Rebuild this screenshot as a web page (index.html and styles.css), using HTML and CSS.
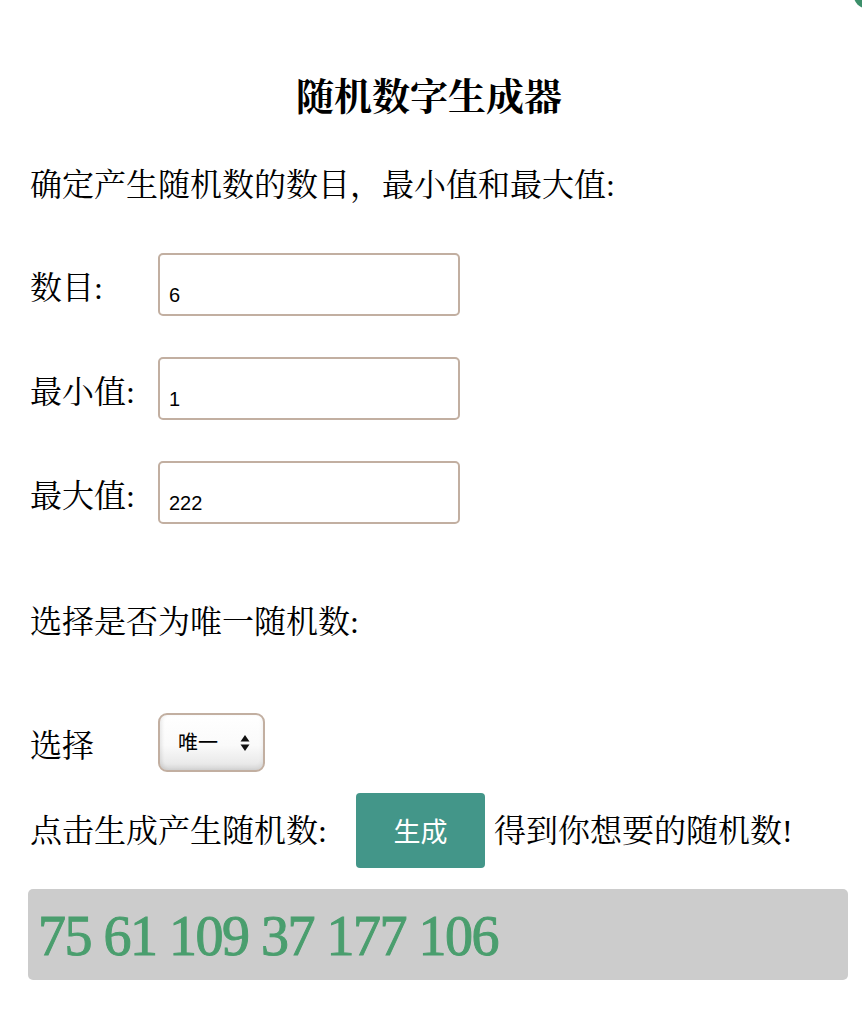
FILE: index.html
```html
<!DOCTYPE html>
<html lang="zh-CN">
<head>
  <meta charset="UTF-8" />
  <meta name="viewport" content="width=device-width, initial-scale=1.0" />
  <title>随机数字生成器</title>
  <link rel="stylesheet" href="styles.css">
</head>
<body>
  <div class="canto"></div>

  <main class="pagina">
    <h1>随机数字生成器</h1>
    <p class="texto">确定产生随机数的数目，最小值和最大值:</p>

    <div class="linha primeira">
      <label for="quantidade">数目:</label>
      <input type="text" id="quantidade" value="6" />
    </div>
    <div class="linha">
      <label for="minimo">最小值:</label>
      <input type="text" id="minimo" value="1" />
    </div>
    <div class="linha">
      <label for="maximo">最大值:</label>
      <input type="text" id="maximo" value="222" />
    </div>

    <p class="texto unico">选择是否为唯一随机数:</p>

    <div class="linha escolha">
      <label for="tipo">选择</label>
      <div class="caixa-select">
        <select id="tipo">
          <option>唯一</option>
          <option>重复</option>
        </select>
        <svg class="setas" width="10" height="18" viewBox="0 0 10 18">
          <path d="M5 1 L9.5 7.5 L0.5 7.5 Z" fill="#111" />
          <path d="M5 17 L9.5 10.5 L0.5 10.5 Z" fill="#111" />
        </svg>
      </div>
    </div>

    <div class="linha-botao">
      <span class="rotulo">点击生成产生随机数:</span>
      <button onclick="gerar()">生成</button>
      <span class="depois">得到你想要的随机数!</span>
    </div>

    <div class="resultado" id="resultado">75 61 109 37 177 106</div>
  </main>

  <script>
    function gerar() {
      const n = parseInt(document.getElementById('quantidade').value) || 0;
      const min = parseInt(document.getElementById('minimo').value) || 0;
      const max = parseInt(document.getElementById('maximo').value) || 0;
      const unico = document.getElementById('tipo').selectedIndex === 0;
      const lista = [];

      while (lista.length < n) {
        const x = Math.floor(Math.random() * (max - min + 1)) + min;
        if (unico && lista.includes(x)) {
          if (max - min + 1 <= lista.length) break;
          continue;
        }
        lista.push(x);
      }

      document.getElementById('resultado').innerText = lista.join(' ');
    }
  </script>
</body>
</html>
```

FILE: styles.css
```css
:root {
  --verde: #439689;
  --verde-numero: #4a9e6e;
  --borda: #c2afa1;
}

* {
  margin: 0;
  padding: 0;
  box-sizing: border-box;
}

body {
  font-family: "Liberation Serif", "Noto Serif CJK SC", "Noto Sans CJK SC", serif;
  background: #fff;
  color: #000;
  overflow: hidden;
}

.canto {
  position: absolute;
  top: -16px;
  right: -16px;
  width: 24px;
  height: 24px;
  border-radius: 50%;
  background: #3c8f6a;
}

.pagina {
  padding: 74px 14px 40px 28px;
}

h1 {
  font-size: 38px;
  line-height: 46px;
  text-align: center;
  font-weight: bold;
  margin-bottom: 45px;
  padding-right: 18px;
}

.texto {
  font-size: 32px;
  line-height: 40px;
  padding-left: 2px;
}

.linha {
  display: flex;
  align-items: center;
  margin-bottom: 41px;
}

.linha.primeira {
  margin-top: 48px;
}

.linha label {
  width: 130px;
  font-size: 32px;
  line-height: 40px;
  padding-left: 2px;
  padding-top: 6px;
}

.linha input {
  width: 302px;
  height: 63px;
  border: 2px solid var(--borda);
  border-radius: 5px;
  font-family: "Liberation Sans", "Noto Sans CJK SC", sans-serif;
  font-size: 20px;
  padding: 22px 9px 0;
  color: #000;
  outline: none;
}

.texto.unico {
  margin-top: 78px;
}

.linha.escolha {
  margin-top: 71px;
  margin-bottom: 21px;
}

.caixa-select {
  position: relative;
  width: 107px;
  height: 59px;
}

.caixa-select select {
  appearance: none;
  -webkit-appearance: none;
  width: 100%;
  height: 100%;
  border: 2px solid var(--borda);
  border-radius: 9px;
  background: linear-gradient(#ffffff 0%, #fafafa 55%, #e4e4e4 100%);
  box-shadow: inset 0 -3px 4px rgba(0, 0, 0, 0.08), inset 3px 0 3px rgba(0, 0, 0, 0.04);
  font-family: "Liberation Sans", "Noto Sans CJK SC", sans-serif;
  font-size: 20px;
  padding-left: 18px;
  color: #000;
  outline: none;
}

.setas {
  position: absolute;
  top: 21px;
  right: 15px;
  pointer-events: none;
}

.linha-botao {
  display: flex;
  align-items: center;
  margin-bottom: 21px;
}

.linha-botao .rotulo,
.linha-botao .depois {
  font-size: 32px;
  line-height: 40px;
}

.linha-botao .rotulo {
  width: 328px;
  padding-left: 2px;
}

button {
  width: 129px;
  height: 75px;
  background-color: var(--verde);
  color: #fff;
  border: none;
  border-radius: 4px;
  font-family: "Liberation Sans", "Noto Sans CJK SC", sans-serif;
  font-size: 27px;
  cursor: pointer;
}

.linha-botao .depois {
  margin-left: 9px;
}

.resultado {
  background-color: #cccccc;
  border-radius: 5px;
  height: 91px;
  display: flex;
  align-items: center;
  padding-left: 10px;
  padding-top: 2px;
  font-size: 56px;
  -webkit-text-stroke: 1px var(--verde-numero);
  letter-spacing: -1.5px;
  color: var(--verde-numero);
}
```
